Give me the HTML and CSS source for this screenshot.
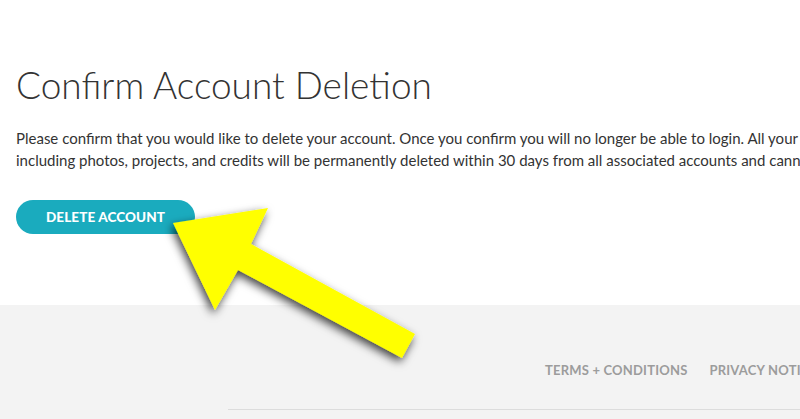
FILE: index.html
```html
<!DOCTYPE html>
<html lang="en">
<head>
    <meta charset="UTF-8">
    <meta name="viewport" content="width=device-width, initial-scale=1.0">
    <title>Confirm Account Deletion</title>
    <link rel="stylesheet" href="styles.css">
</head>
<body>

<div class="page">
    <section class="content">
        <h1>Confirm Account Deletion</h1>
        <p>Please confirm that you would like to delete your account. Once you confirm you will no longer be able to login. All your information,<br>
        including photos, projects, and credits will be permanently deleted within 30 days from all associated accounts and cannot be recovered.</p>
        <button type="button" class="delete-btn">DELETE ACCOUNT</button>
    </section>

    <footer>
        <nav class="footer-links">
            <a href="#">TERMS + CONDITIONS</a>
            <a href="#">PRIVACY NOTICE</a>
        </nav>
        <div class="footer-bottom"></div>
    </footer>
</div>

<!-- annotation arrow -->
<svg class="arrow" width="800" height="419" viewBox="0 0 800 419">
    <defs>
        <filter id="shadow" x="-20%" y="-20%" width="140%" height="140%">
            <feDropShadow dx="-2" dy="4" stdDeviation="5" flood-color="#000" flood-opacity="0.75"/>
        </filter>
    </defs>
    <polygon filter="url(#shadow)" fill="#ffff00"
        points="173,223 268,208 251,244 415,334 402,358 238,270 215,310"/>
</svg>

</body>
</html>
```

FILE: styles.css
```css
body {
    margin: 0;
    padding: 0;
    overflow: hidden;
    font-family: Lato, "Open Sans", sans-serif;
    color: #333;
    background: #fff;
}
.page {
    width: 1100px;
}
.content {
    padding: 60px 16px 0;
    height: 245px;
}
h1 {
    margin: 0;
    font-weight: 300;
    font-size: 37px;
    line-height: 50px;
    color: #333;
}
p {
    margin: 17px 0 0;
    font-size: 15px;
    line-height: 22px;
    white-space: nowrap;
}
.delete-btn {
    margin-top: 29px;
    width: 179px;
    height: 34px;
    border: none;
    border-radius: 17px;
    background-color: #1aabbe;
    color: #fff;
    font-family: Lato, sans-serif;
    font-weight: 900;
    font-size: 13.5px;
    letter-spacing: 0.1px;
}
footer {
    background-color: #f3f3f3;
    height: 114px;
    padding-top: 1px;
}
.footer-links {
    display: flex;
    gap: 22px;
    padding: 56px 0 0 545px;
    height: 47px;
}
.footer-links a {
    color: #9c9c9c;
    font-weight: 700;
    font-size: 13px;
    text-decoration: none;
    letter-spacing: 0.2px;
}
.footer-bottom {
    margin-left: 228px;
    border-top: 1px solid #dcdcdc;
}
.arrow {
    position: absolute;
    left: 0;
    top: 0;
}
```
